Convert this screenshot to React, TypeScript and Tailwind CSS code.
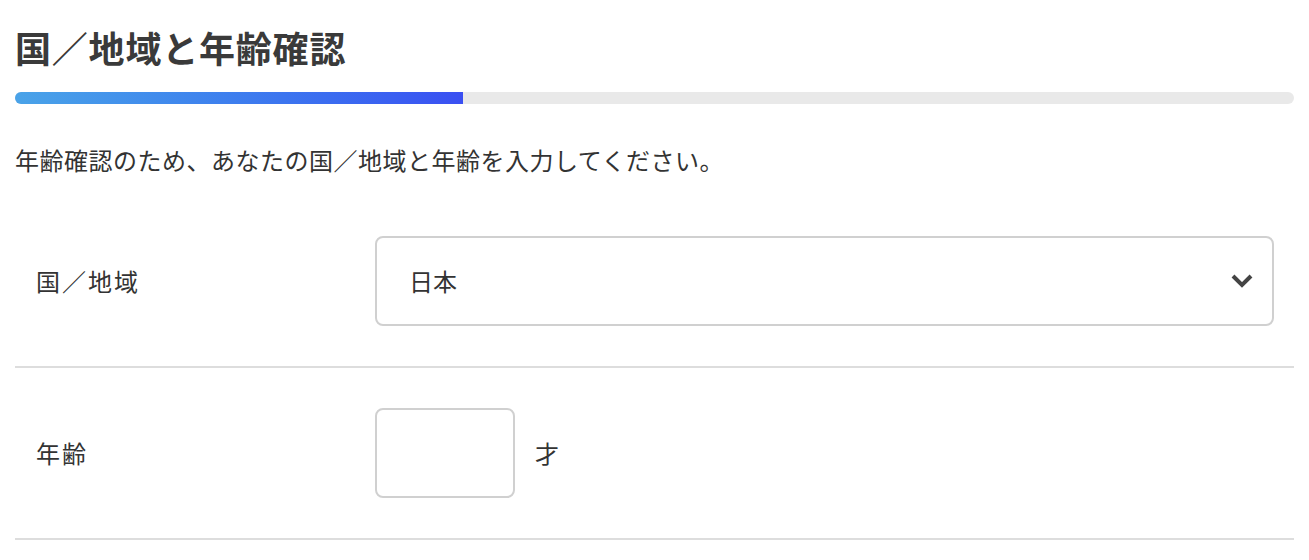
import { useState } from "react";

function Chevron() {
  return (
    <svg width="22" height="14" viewBox="0 0 22 14" fill="none" className="text-[#444]">
      <polyline points="2,2 11,11 20,2" stroke="currentColor" strokeWidth="4" strokeLinecap="butt" strokeLinejoin="miter" />
    </svg>
  );
}

export default function App() {
  const [age, setAge] = useState("");

  return (
    <div className="px-[15px] pt-[23px] pb-6 bg-white text-[#333] font-['Noto_Sans_CJK_JP','Noto_Sans',sans-serif]">
      {/* Title */}
      <h1 className="text-[36px] leading-[48px] font-bold tracking-[0.8px] text-[#3a3a3a]">国／地域と年齢確認</h1>

      {/* Progress */}
      <div className="mt-[21px] h-[12px] rounded-full bg-[#e9e9e9] overflow-hidden">
        <div className="h-full w-[35%] bg-gradient-to-r from-[#4aa3e8] to-[#3a4ff2]" />
      </div>

      <p className="mt-[38px] text-[24px] leading-[36px] tracking-[0.5px]">
        年齢確認のため、あなたの国／地域と年齢を入力してください。
      </p>

      {/* Form rows */}
      <div className="mt-[18px]">
        <div className="flex items-center py-[40px] border-b-2 border-[#dddddd]">
          <div className="w-[360px] pl-[21px] text-[24px] tracking-[2px]">国／地域</div>
          <div className="flex-1 mr-[20px] h-[90px] border-2 border-[#d0d0d0] rounded-[8px] flex items-center justify-between pl-[32px] pr-[19px]">
            <span className="text-[24px]">日本</span>
            <Chevron />
          </div>
        </div>

        <div className="flex items-center py-[40px] border-b-2 border-[#dddddd]">
          <div className="w-[360px] pl-[21px] text-[24px] tracking-[2px]">年齢</div>
          <input
            value={age}
            onChange={(e) => setAge(e.target.value)}
            className="w-[140px] h-[90px] border-2 border-[#d0d0d0] rounded-[8px] px-4 text-[24px] outline-none"
          />
          <span className="ml-[20px] text-[24px]">才</span>
        </div>
      </div>
    </div>
  );
}
